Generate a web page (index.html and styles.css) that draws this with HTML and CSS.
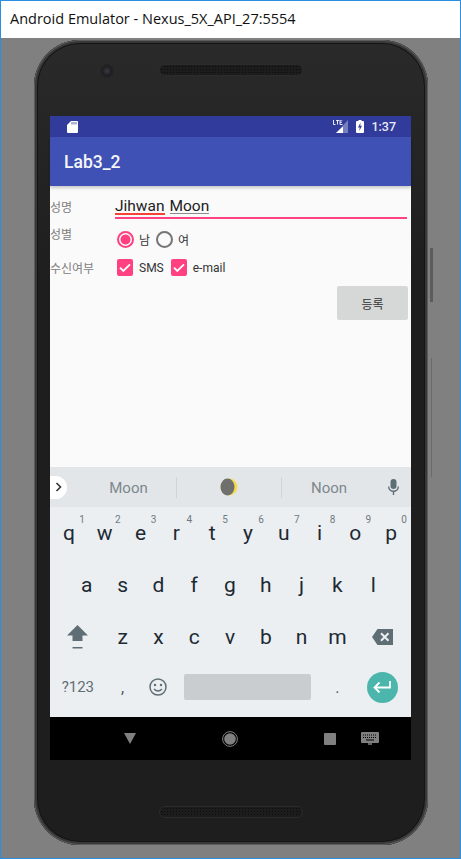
FILE: index.html
```html
<!DOCTYPE html>
<html lang="en">

<head>
    <meta charset="UTF-8">
    <meta name="viewport" content="width=device-width, initial-scale=1.0">
    <title>Android Emulator</title>
    <link rel="stylesheet" href="styles.css">
</head>

<body>
    <div class="titlebar">Android Emulator - Nexus_5X_API_27:5554</div>

    <div class="stage">
        <div class="phone">
            <div class="btn-power"></div>
            <div class="btn-volume"></div>

            <div class="phone-top">
                <div class="camera"></div>
                <div class="speaker"></div>
            </div>

            <div class="screen">
                <div class="statusbar">
                    <svg class="sd-icon" width="11" height="12" viewBox="0 0 11 12">
                        <path d="M4 0h6a1 1 0 0 1 1 1v10a1 1 0 0 1-1 1H1a1 1 0 0 1-1-1V4z" fill="#fff" />
                        <path d="M5 1v2.500M7 1v2.500M9 1v2.500" stroke="#303f9f" stroke-width=".8" />
                    </svg>
                    <div class="status-right">
                        <svg width="15" height="13" viewBox="0 0 15 13">
                            <path d="M15 0v13H3z" fill="#fff" opacity=".35" />
                            <path d="M10 6.500v6.500H3z" fill="#fff" />
                            <path d="M.5 0v4.500h2M3 .4h3M4.500 0v4.500M7 4.500V0h2.500M7 2.200h2M7 4.500h2.500" fill="none" stroke="#fff" stroke-width=".9" />
                        </svg>
                        <svg class="battery" width="8" height="13" viewBox="0 0 8 13">
                            <path d="M2.500 0h3v1H7a1 1 0 0 1 1 1v10a1 1 0 0 1-1 1H1a1 1 0 0 1-1-1V2a1 1 0 0 1 1-1h1.500z" fill="#fff" />
                            <path d="M4.600 2.500 2 7.500h1.700L3.300 11 6 5.800H4.200z" fill="#303f9f" />
                        </svg>
                        <span class="clock">1:37</span>
                    </div>
                </div>

                <div class="appbar">Lab3_2</div>

                <div class="content">
                    <div class="row row-name">
                        <label class="field-label">성명</label>
                        <div class="name-input">
                            <span class="typed typed-error">Jihwan</span>
                            <span class="typed">Moon</span>
                        </div>
                    </div>

                    <div class="row row-gender">
                        <label class="field-label">성별</label>
                        <div class="options">
                            <span class="radio radio-on"></span>
                            <span class="opt-text">남</span>
                            <span class="radio"></span>
                            <span class="opt-text">여</span>
                        </div>
                    </div>

                    <div class="row row-receive">
                        <label class="field-label">수신여부</label>
                        <div class="options">
                            <svg class="check" width="16" height="17" viewBox="0 0 16 17">
                                <rect width="16" height="17" rx="2" fill="#ff4081" />
                                <path d="M3 8.700l3.300 3.300L13 5.300" fill="none" stroke="#fff" stroke-width="1.800" />
                            </svg>
                            <span class="opt-text opt-sms">SMS</span>
                            <svg class="check" width="16" height="17" viewBox="0 0 16 17">
                                <rect width="16" height="17" rx="2" fill="#ff4081" />
                                <path d="M3 8.700l3.300 3.300L13 5.300" fill="none" stroke="#fff" stroke-width="1.800" />
                            </svg>
                            <span class="opt-text opt-mail">e-mail</span>
                        </div>
                    </div>

                    <div class="submit-row">
                        <button class="submit-btn">등록</button>
                    </div>
                </div>

                <div class="suggestions">
                    <div class="pill">
                        <svg width="8" height="10" viewBox="0 0 8 10">
                            <path d="M1.500 1l4 4-4 4" fill="none" stroke="#333" stroke-width="1.600" />
                        </svg>
                    </div>
                    <div class="sug sug-first">Moon</div>
                    <div class="sug sug-mid">
                        <svg width="18" height="18" viewBox="0 0 18 18">
                            <circle cx="9" cy="9" r="8.500" fill="#f4dc4c" />
                            <ellipse cx="7.500" cy="9" rx="7" ry="8.500" fill="#6f6f6d" />
                        </svg>
                    </div>
                    <div class="sug sug-last">Noon</div>
                    <div class="sug-mic">
                        <svg width="11" height="16" viewBox="0 0 11 16">
                            <rect x="2.500" y="0" width="6" height="10" rx="3" fill="#5f6e75" />
                            <path d="M.7 7.500a4.800 4.800 0 0 0 9.600 0M5.500 12.500V16" fill="none" stroke="#5f6e75" stroke-width="1.400" />
                        </svg>
                    </div>
                </div>

                <div class="keyboard">
                    <div class="keyrow">
                        <div class="key">q<span class="hint">1</span></div>
                        <div class="key">w<span class="hint">2</span></div>
                        <div class="key">e<span class="hint">3</span></div>
                        <div class="key">r<span class="hint">4</span></div>
                        <div class="key">t<span class="hint">5</span></div>
                        <div class="key">y<span class="hint">6</span></div>
                        <div class="key">u<span class="hint">7</span></div>
                        <div class="key">i<span class="hint">8</span></div>
                        <div class="key">o<span class="hint">9</span></div>
                        <div class="key">p<span class="hint">0</span></div>
                    </div>
                    <div class="keyrow">
                        <div class="key key-a">a</div>
                        <div class="key">s</div>
                        <div class="key">d</div>
                        <div class="key">f</div>
                        <div class="key">g</div>
                        <div class="key">h</div>
                        <div class="key">j</div>
                        <div class="key">k</div>
                        <div class="key">l</div>
                    </div>
                    <div class="keyrow">
                        <div class="key key-wide">
                            <svg width="21" height="24" viewBox="0 0 21 24">
                                <path d="M10.500 0 21 10.500h-5.500V16h-10v-5.500H0z" fill="#5f6e75" />
                                <rect x="5.500" y="22" width="10" height="1.500" fill="#5f6e75" />
                            </svg>
                        </div>
                        <div class="key">z</div>
                        <div class="key">x</div>
                        <div class="key">c</div>
                        <div class="key">v</div>
                        <div class="key">b</div>
                        <div class="key">n</div>
                        <div class="key">m</div>
                        <div class="key key-wide">
                            <svg width="21" height="16" viewBox="0 0 21 16">
                                <path d="M5.500 0H21v16H5.500L0 8z" fill="#5f6e75" />
                                <path d="M9 4.200l7.500 7.600M16.500 4.200 9 11.800" stroke="#eceff1" stroke-width="2" />
                            </svg>
                        </div>
                    </div>
                    <div class="keyrow keyrow-last">
                        <div class="key key-wide key-sym">?123</div>
                        <div class="key key-comma">,</div>
                        <div class="key">
                            <svg width="18" height="18" viewBox="0 0 18 18">
                                <circle cx="9" cy="9" r="8" fill="none" stroke="#5f6e75" stroke-width="1.500" />
                                <circle cx="6" cy="7" r="1.200" fill="#5f6e75" />
                                <circle cx="12" cy="7" r="1.200" fill="#5f6e75" />
                                <path d="M5 11q4 4 8 0" fill="none" stroke="#5f6e75" stroke-width="1.400" />
                            </svg>
                        </div>
                        <div class="key key-space"><span class="spacebar"></span></div>
                        <div class="key key-dot">.</div>
                        <div class="key key-wide">
                            <span class="enter">
                                <svg width="18" height="12" viewBox="0 0 18 12">
                                    <path d="M17 0v6.500H2M6.500 1.500 1.500 6.500l5 5" fill="none" stroke="#fff" stroke-width="1.800" />
                                </svg>
                            </span>
                        </div>
                    </div>
                </div>

                <div class="navbar">
                    <svg class="nav-back" width="12" height="11" viewBox="0 0 12 11">
                        <path d="M0 0h12L6 11z" fill="#808080" />
                    </svg>
                    <svg class="nav-home" width="16" height="16" viewBox="0 0 16 16">
                        <circle cx="8" cy="8" r="7.400" fill="none" stroke="#808080" />
                        <circle cx="8" cy="8" r="5.800" fill="#808080" />
                    </svg>
                    <svg class="nav-recent" width="12" height="12" viewBox="0 0 12 12">
                        <rect width="12" height="12" rx="1" fill="#808080" />
                    </svg>
                    <svg class="nav-kbd" width="18" height="13" viewBox="0 0 18 13">
                        <rect width="18" height="11" rx="1" fill="#808080" />
                        <path d="M2 3h14M2 5.500h14" stroke="#000" stroke-width="1" stroke-dasharray="1 1" />
                        <path d="M5 8h8" stroke="#000" stroke-width="1" />
                        <path d="M7 12h4" stroke="#808080" stroke-width="1.500" />
                    </svg>
                </div>
            </div>

            <div class="phone-bottom">
                <div class="speaker"></div>
            </div>
        </div>
    </div>
</body>

</html>
```

FILE: styles.css
```css
html,
body {
    margin: 0;
    padding: 0;
}

body {
    width: 461px;
    height: 859px;
    box-sizing: border-box;
    border: 1px solid #2a8fe0;
    background-color: #808080;
    overflow: hidden;
    font-family: Roboto, "Noto Sans CJK KR", sans-serif;
}

.titlebar {
    height: 37px;
    line-height: 36px;
    padding-left: 9px;
    background-color: #fff;
    color: #111;
    font-family: "Open Sans", sans-serif;
    font-size: 14.500px;
}

.stage {
    padding: 2px 0 0 33px;
}

.phone {
    position: relative;
    width: 394px;
    height: 805px;
    box-sizing: border-box;
    padding-left: 16px;
    background: linear-gradient(#2a2a2a, #1e1e1e 30%, #1e1e1e);
    border-radius: 46px;
    box-shadow: inset 0 0 0 1px #5c5c5c, inset 0 0 0 3px #383838, inset 0 0 0 4px #141414;
}

.btn-power,
.btn-volume {
    position: absolute;
    background-color: #5c5c5c;
}

.btn-power {
    left: 396px;
    top: 208px;
    width: 3px;
    height: 54px;
}

.btn-volume {
    left: 397px;
    top: 318px;
    width: 1px;
    height: 119px;
    background-color: #6a6a6a;
}

.phone-top {
    display: flex;
    height: 76px;
    box-sizing: border-box;
    padding: 24px 0 0 50px;
}

.camera {
    width: 14px;
    height: 14px;
    margin-right: 45px;
    border-radius: 50%;
    background: radial-gradient(circle, #403844 0, #1f1f22 45%, #2a2a2a 100%);
}

.speaker {
    width: 144px;
    height: 12px;
    border-radius: 6px;
    border: 1px solid #2b2b2b;
    box-sizing: border-box;
    background-color: #1c1c1c;
    background-image: radial-gradient(circle, #0c0c0c 0.8px, transparent 1px);
    background-size: 3px 3px;
}

.phone-bottom {
    height: 85px;
    box-sizing: border-box;
    padding: 46px 0 0 109px;
}

.screen {
    width: 361px;
    height: 644px;
    display: flex;
    flex-direction: column;
    background-color: #000;
}

.statusbar {
    display: flex;
    justify-content: space-between;
    align-items: center;
    height: 21px;
    flex-shrink: 0;
    padding: 0 15px 0 17px;
    background-color: #303b9c;
    color: #e8eaf6;
}

.status-right {
    display: flex;
    align-items: center;
}

.battery {
    margin-left: 8px;
}

.clock {
    margin-left: 7px;
    font-size: 12.500px;
    font-weight: 500;
}

.appbar {
    position: relative;
    z-index: 1;
    height: 49px;
    flex-shrink: 0;
    line-height: 50px;
    padding-left: 14px;
    background-color: #3f51b5;
    color: #f5f5f5;
    font-size: 17.500px;
    font-weight: 500;
    box-shadow: 0 2px 3px rgba(0, 0, 0, 0.2);
}

.content {
    height: 281px;
    flex-shrink: 0;
    background-color: #fafafa;
}

.row {
    display: flex;
}

.field-label {
    width: 65px;
    flex-shrink: 0;
    color: #808080;
    font-size: 12px;
}

.row-name {
    height: 33px;
    padding-top: 12px;
    box-sizing: border-box;
}

.name-input {
    display: flex;
    gap: 5px;
    width: 292px;
    height: 21px;
    box-sizing: border-box;
    border-bottom: 2px solid #ff4081;
    color: #212121;
    font-size: 15.500px;
    line-height: 18px;
}

.typed {
    height: 16px;
    margin-top: -1px;
    border-bottom: 1px solid #8a8a8a;
}

.typed-error {
    border-bottom: 2px solid #f44336;
}

.row-gender {
    height: 37px;
    box-sizing: border-box;
    padding-top: 6px;
}

.row-receive {
    height: 25px;
    align-items: center;
    margin-top: -1px;
}

.options {
    display: flex;
    align-items: center;
}

.row-gender .options {
    margin-top: 3px;
    height: 22px;
}

.radio {
    width: 13px;
    height: 13px;
    margin-left: 2px;
    border: 2px solid #757575;
    border-radius: 50%;
    background-color: transparent;
}

.radio + .opt-text {
    margin: 0 4px 0 5px;
}

.radio-on {
    border-color: #ff4081;
    background: radial-gradient(circle, #ff4081 0, #ff4081 4.700px, transparent 5.300px);
}

.opt-text {
    color: #333;
    font-size: 12px;
    margin: 0 6px 0 6px;
}

.check {
    margin-left: 2px;
}

.opt-sms {
    margin-right: 5px;
}

.submit-row {
    display: flex;
    justify-content: flex-end;
    padding: 6px 3px 0 0;
}

.submit-btn {
    width: 71px;
    height: 34px;
    padding: 0;
    border: none;
    border-radius: 2px;
    background-color: #d6d7d7;
    color: #333;
    font-family: Roboto, "Noto Sans CJK KR", sans-serif;
    font-size: 12px;
}

.suggestions {
    display: flex;
    align-items: center;
    height: 40px;
    flex-shrink: 0;
    background-color: #e3e6e9;
}

.pill {
    display: flex;
    align-items: center;
    justify-content: center;
    width: 17px;
    height: 23px;
    border-radius: 0 12px 12px 0;
    background-color: #fff;
}

.sug {
    display: flex;
    align-items: center;
    justify-content: center;
    height: 21px;
    box-sizing: border-box;
    padding-top: 2px;
    color: #7d888e;
    font-size: 15px;
}

.sug-first {
    width: 110px;
    padding-left: 14px;
    border-right: 1px solid #cfd4d7;
}

.sug-mid {
    width: 105px;
    padding-top: 0;
    border-right: 1px solid #cfd4d7;
}

.sug-last {
    width: 94px;
}

.sug-mic {
    display: flex;
    justify-content: center;
    width: 35px;
}

.keyboard {
    height: 210px;
    flex-shrink: 0;
    box-sizing: border-box;
    padding: 0 2px 0 1px;
    background-color: #eceff1;
    color: #1c2a33;
}

.keyrow {
    display: grid;
    grid-template-columns: repeat(20, 1fr);
    height: 52px;
}

.keyrow-last {
    height: 54px;
    padding-bottom: 6px;
    box-sizing: border-box;
}

.key {
    position: relative;
    grid-column: span 2;
    display: flex;
    align-items: center;
    justify-content: center;
    font-size: 21px;
}

.key-a {
    grid-column: 2 / span 2;
}

.key-wide {
    grid-column: span 3;
}

.key-sym {
    color: #5f6e75;
    font-size: 15px;
}

.key-comma,
.key-dot {
    color: #4a5860;
    font-size: 16px;
}

.key-space {
    grid-column: span 8;
}

.spacebar {
    width: 127px;
    height: 26px;
    border-radius: 2px;
    background-color: #c9cdd0;
}

.enter {
    display: flex;
    align-items: center;
    justify-content: center;
    width: 31px;
    height: 31px;
    border-radius: 50%;
    background-color: #4db6ac;
}

.hint {
    position: absolute;
    top: 7px;
    right: 2px;
    color: #6f7a80;
    font-size: 10px;
}

.navbar {
    display: flex;
    align-items: center;
    height: 43px;
    flex-shrink: 0;
    padding-left: 74px;
    background-color: #000;
}

.nav-home {
    margin-left: 86px;
}

.nav-recent {
    margin-left: 86px;
}

.nav-kbd {
    margin-left: 25px;
}
```
